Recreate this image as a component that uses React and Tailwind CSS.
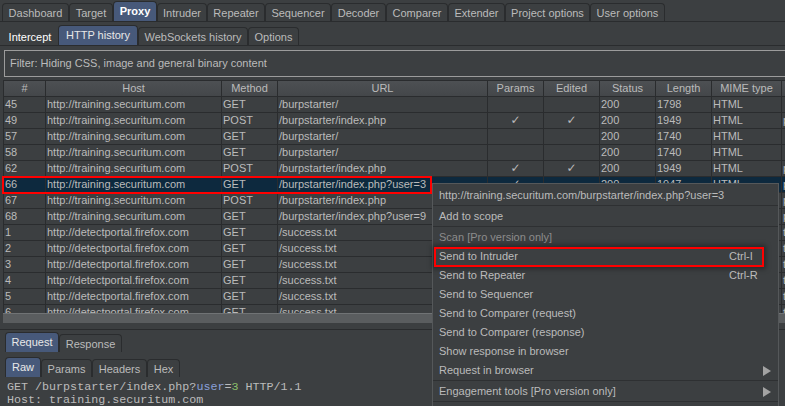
import React from 'react';

const topTabs = [
  { label: 'Dashboard', w: 'w-[67px]' },
  { label: 'Target', w: 'w-[44px]' },
  { label: 'Proxy', w: 'w-[44px]', active: true },
  { label: 'Intruder', w: 'w-[50px]' },
  { label: 'Repeater', w: 'w-[58px]' },
  { label: 'Sequencer', w: 'w-[66px]' },
  { label: 'Decoder', w: 'w-[55px]' },
  { label: 'Comparer', w: 'w-[62px]' },
  { label: 'Extender', w: 'w-[57px]' },
  { label: 'Project options', w: 'w-[85px]' },
  { label: 'User options', w: 'w-[75px]' },
];

const proxyTabs = [
  { label: 'Intercept', w: 'w-[56px]', bright: true },
  { label: 'HTTP history', w: 'w-[80px]', active: true },
  { label: 'WebSockets history', w: 'w-[110px]' },
  { label: 'Options', w: 'w-[51px]' },
];

const columns = [
  { label: '#', w: 'w-[42px]' },
  { label: 'Host', w: 'w-[176px]' },
  { label: 'Method', w: 'w-[56px]' },
  { label: 'URL', w: 'w-[210px]' },
  { label: 'Params', w: 'w-[56px]', center: true },
  { label: 'Edited', w: 'w-[56px]', center: true },
  { label: 'Status', w: 'w-[56px]' },
  { label: 'Length', w: 'w-[56px]' },
  { label: 'MIME type', w: 'w-[70px]' },
  { label: 'Extension', w: 'w-[80px]' },
];

const T = 'http://training.securitum.com';
const D = 'http://detectportal.firefox.com';

// rows below the selected one are covered by the context menu right of the URL column
const rows = [
  ['45', T, 'GET', '/burpstarter/', '', '', '200', '1798', 'HTML', ''],
  ['49', T, 'POST', '/burpstarter/index.php', '✓', '✓', '200', '1949', 'HTML', 'php'],
  ['57', T, 'GET', '/burpstarter/', '', '', '200', '1740', 'HTML', ''],
  ['58', T, 'GET', '/burpstarter/', '', '', '200', '1740', 'HTML', ''],
  ['62', T, 'POST', '/burpstarter/index.php', '✓', '✓', '200', '1949', 'HTML', 'php'],
  ['66', T, 'GET', '/burpstarter/index.php?user=3', '✓', '', '200', '1947', 'HTML', 'php'],
  ['67', T, 'POST', '/burpstarter/index.php', '', '', '', '', '', 'php'],
  ['68', T, 'GET', '/burpstarter/index.php?user=9', '', '', '', '', '', 'php'],
  ['1', D, 'GET', '/success.txt', '', '', '', '', '', 'txt'],
  ['2', D, 'GET', '/success.txt', '', '', '', '', '', 'txt'],
  ['3', D, 'GET', '/success.txt', '', '', '', '', '', 'txt'],
  ['4', D, 'GET', '/success.txt', '', '', '', '', '', 'txt'],
  ['5', D, 'GET', '/success.txt', '', '', '', '', '', 'txt'],
  ['6', D, 'GET', '/success.txt', '', '', '', '', '', 'txt'],
];

const menu = [
  { label: 'http://training.securitum.com/burpstarter/index.php?user=3' },
  { sep: true },
  { label: 'Add to scope' },
  { sep: true },
  { label: 'Scan [Pro version only]', disabled: true },
  { label: 'Send to Intruder', keys: 'Ctrl-I', boxed: true },
  { label: 'Send to Repeater', keys: 'Ctrl-R' },
  { label: 'Send to Sequencer' },
  { label: 'Send to Comparer (request)' },
  { label: 'Send to Comparer (response)' },
  { label: 'Show response in browser' },
  { label: 'Request in browser', sub: true },
  { sep: true },
  { label: 'Engagement tools [Pro version only]', sub: true },
  { sep: true },
];

function Tab({ label, w, active, bright }) {
  return (
    <div
      className={`${w} shrink-0 flex items-center justify-center rounded-t-[4px] border border-b-0 border-[#2a2c2e] ${
        active ? 'h-[20px] bg-[#47597a] text-[#e8e8e8]' : 'h-[18px] pt-[1px]'
      } ${bright ? 'text-white border-transparent' : ''}`}
    >
      {label}
    </div>
  );
}

function Arrow() {
  return (
    <svg width="8" height="10" viewBox="0 0 8 10" className="mr-[7px]">
      <path d="M0 0 L8 5 L0 10 Z" fill="#a3a3a3" />
    </svg>
  );
}

export default function App() {
  return (
    <div className="relative w-[785px] h-[406px] overflow-hidden bg-[#3c3f41] text-[11px] text-[#bbbbbb] font-['Liberation_Sans',Arial,sans-serif] leading-none">
      {/* Main tabs */}
      <div className="h-[22px] flex items-end pl-[2px] border-b border-[#2a2c2e]">
        {topTabs.map((t) => (
          <div
            key={t.label}
            className={`${t.w} shrink-0 flex items-center justify-center rounded-t-[4px] border border-b-0 border-[#2a2c2e] ${
              t.active ? 'h-[20px] bg-[#47597a] text-white font-bold pb-[1px]' : 'h-[18px] pt-[1px]'
            }`}
          >
            {t.label}
          </div>
        ))}
      </div>

      {/* Proxy sub tabs */}
      <div className="h-[24px] flex items-end pl-[2px] border-b border-[#2a2c2e]">
        {proxyTabs.map((t) => (
          <Tab key={t.label} {...t} />
        ))}
      </div>

      {/* Filter bar */}
      <div className="mt-[4px] ml-[4px] w-[800px] h-[27px] border border-[#9c9c9c] flex items-center pl-[5px]">
        Filter: Hiding CSS, image and general binary content
      </div>

      {/* History table */}
      <div className="mt-[3px] ml-[3px] h-[233px] overflow-hidden border-l border-[#2a2c2e] w-[900px]">
        <div className="flex h-[17px] border-y border-[#2a2c2e] bg-gradient-to-b from-[#4d5053] to-[#44474a]">
          {columns.map((c) => (
            <div key={c.label} className={`${c.w} shrink-0 border-r border-[#2a2c2e] flex items-center justify-center`}>
              {c.label}
            </div>
          ))}
        </div>
        {rows.map((r, i) => (
          <div key={i} className={`flex h-[16px] border-b border-[#2a2c2e] ${i === 5 ? 'bg-[#0d293e]' : ''}`}>
            {r.map((v, j) => (
              <div
                key={j}
                className={`${columns[j].w} shrink-0 border-r border-[#2a2c2e] leading-[15px] whitespace-nowrap overflow-hidden ${
                  columns[j].center ? 'text-center font-["DejaVu_Sans",sans-serif] text-[12px]' : 'pl-[1px]'
                }`}
              >
                {v}
              </div>
            ))}
          </div>
        ))}
      </div>

      {/* Horizontal scrollbar */}
      <div className="ml-[3px] h-[10px] w-[800px] bg-[#5a5d5f] border-t border-[#707375]" />
      <div className="h-[7px] border-b border-[#2a2c2e]" />

      {/* Request / Response pane */}
      <div className="h-[22px] flex items-end pl-[5px]">
        <Tab label="Request" w="w-[54px]" active />
        <Tab label="Response" w="w-[63px]" />
      </div>
      <div className="h-[25px] flex items-end pl-[5px]">
        <Tab label="Raw" w="w-[36px]" active />
        <Tab label="Params" w="w-[51px]" />
        <Tab label="Headers" w="w-[55px]" />
        <Tab label="Hex" w="w-[33px]" />
      </div>
      <div className="pt-[4px] pl-[7px] font-['Liberation_Mono',monospace] text-[11.7px] leading-[13px] whitespace-pre">
        <div>
          GET /burpstarter/index.php?<span className="text-[#8a9fd8]">user</span>=<span className="text-[#8cbf6a]">3</span> HTTP/1.1
        </div>
        <div>Host: training.securitum.com</div>
      </div>

      {/* Selected row highlight */}
      <div className="absolute left-[2px] top-[176px] w-[430px] h-[18px] border-2 border-[#ff0000]" />

      {/* Context menu */}
      <div className="absolute left-[432px] top-[183px] w-[347px] h-[240px] bg-[#3c3f41] border border-[#55585a] pt-[2px]">
        {menu.map((m, i) =>
          m.sep ? (
            <div key={i} className="h-[2px] border-t border-[#2e3032]" />
          ) : (
            <div
              key={i}
              className={`relative h-[19px] flex items-center pl-[6px] ${m.disabled ? 'text-[#8c8c8c]' : ''}`}
            >
              <span className="flex-1 whitespace-nowrap">{m.label}</span>
              {m.keys && <span className="w-[49px]">{m.keys}</span>}
              {m.sub && <Arrow />}
              {m.boxed && (
                <div className="absolute left-[1px] top-0 w-[330px] h-[20px] border-2 border-[#ff0000] shadow-[0_0_5px_2px_rgba(0,0,0,0.35)]" />
              )}
            </div>
          )
        )}
      </div>
    </div>
  );
}
